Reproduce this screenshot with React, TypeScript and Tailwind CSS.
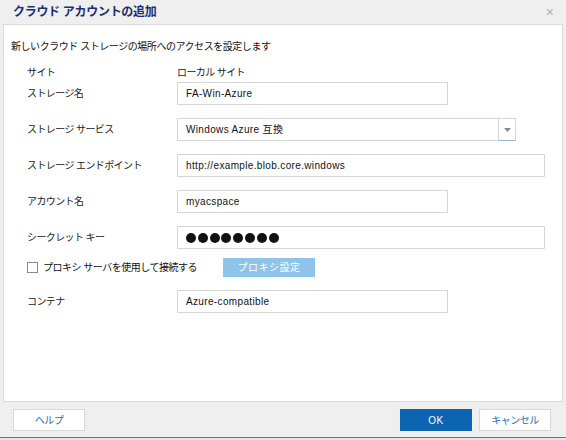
import React from "react";

const FONT = '"Liberation Sans", "Noto Sans CJK JP", sans-serif';

function Row({ label, children }: { label: string; children: React.ReactNode }) {
  return (
    <div className="flex items-center h-[23px]">
      <div className="w-[150px] text-[10px] text-[#222] tracking-[-0.6px]">{label}</div>
      {children}
    </div>
  );
}

function Input({ value, w }: { value: React.ReactNode; w: string }) {
  return (
    <div className={`${w} h-[23px] border border-[#d6d6d6] bg-white flex items-center pl-[8px] text-[10px] text-[#111] tracking-[0.35px]`}>
      {value}
    </div>
  );
}

export default function App() {
  return (
    <div className="w-[566px] h-[440px] bg-[#efefef] flex flex-col overflow-hidden" style={{ fontFamily: FONT }}>
      {/* title bar */}
      <div className="h-[24px] flex items-center justify-between pl-[13px] pr-[12px]">
        <div className="text-[12px] font-bold text-[#1f2e6e] tracking-[-0.3px]">クラウド アカウントの追加</div>
        <div className="text-[14px] text-[#b0b0b0] leading-none">×</div>
      </div>
      {/* panel */}
      <div className="mx-[3px] h-[378px] bg-white border border-[#dadada] flex flex-col">
        <div className="pl-[7px] mt-[15px] text-[10px] text-[#111] leading-[14px] tracking-[-0.45px]">
          新しいクラウド ストレージの場所へのアクセスを設定します
        </div>
        <div className="pl-[23px] flex flex-col">
          <div className="flex items-center h-[14px] mt-[11px]">
            <div className="w-[150px] text-[10px] text-[#222] tracking-[-0.6px]">サイト</div>
            <div className="text-[10px] text-[#222] tracking-[-0.6px]">ローカル サイト</div>
          </div>
          <div className="flex flex-col gap-[13px] mt-[3px]">
            <Row label="ストレージ名">
              <Input w="w-[271px]" value="FA-Win-Azure" />
            </Row>
            <Row label="ストレージ サービス">
              <div className="flex h-[23px]">
                <div className="w-[322px] h-[23px] border border-[#d6d6d6] flex items-center pl-[8px] text-[10px] text-[#111] tracking-[0.35px]">
                  Windows Azure 互換
                </div>
                <div className="w-[17px] h-[23px] border border-l-0 border-[#d6d6d6] border-b-[#8db6e2] flex items-center justify-center">
                  <svg width="7" height="4" viewBox="0 0 7 4">
                    <path d="M0 0 L7 0 L3.5 4 Z" fill="#8a8a8a" />
                  </svg>
                </div>
              </div>
            </Row>
            <Row label="ストレージ エンドポイント">
              <Input w="w-[368px]" value="http://example.blob.core.windows" />
            </Row>
            <Row label="アカウント名">
              <Input w="w-[271px]" value="myacspace" />
            </Row>
            <Row label="シークレット キー">
              <Input
                w="w-[368px]"
                value={
                  <div className="flex gap-[1.8px]">
                    {Array.from({ length: 8 }).map((_, i) => (
                      <span key={i} className="w-[10px] h-[10px] rounded-full bg-[#111] inline-block" />
                    ))}
                  </div>
                }
              />
            </Row>
          </div>
          <div className="flex items-center h-[19px] mt-[9px]">
            <div className="w-[196px] flex items-center">
              <span className="w-[11px] h-[11px] border border-[#8a8a8a] bg-white inline-block mr-[5px]" />
              <span className="text-[10px] text-[#111] tracking-[-0.5px]">プロキシ サーバを使用して接続する</span>
            </div>
            <div className="w-[92px] h-[19px] bg-[#8fc4ea] text-white text-[10px] flex items-center justify-center tracking-[0.5px]">
              プロキシ設定
            </div>
          </div>
          <div className="mt-[13px]">
            <Row label="コンテナ">
              <Input w="w-[271px]" value="Azure-compatible" />
            </Row>
          </div>
        </div>
      </div>
      {/* footer */}
      <div className="h-[35px] flex items-start pt-[7px] pl-[13px] pr-[15px]">
        <div className="w-[72px] h-[22px] bg-white border border-[#d8d8d8] text-[#2a6bb8] text-[10px] flex items-center justify-center tracking-[-0.5px]">
          ヘルプ
        </div>
        <div className="flex-1" />
        <div className="w-[72px] h-[22px] bg-[#0b65b0] text-white text-[10px] flex items-center justify-center tracking-[0.5px]">
          OK
        </div>
        <div className="w-[72px] h-[22px] ml-[7px] bg-white border border-[#d8d8d8] text-[#2a6bb8] text-[10px] flex items-center justify-center tracking-[-0.5px]">
          キャンセル
        </div>
      </div>
      <div className="h-[1px] bg-[#707070]" />
      <div className="flex-1 bg-[#e6e6e6]" />
    </div>
  );
}
